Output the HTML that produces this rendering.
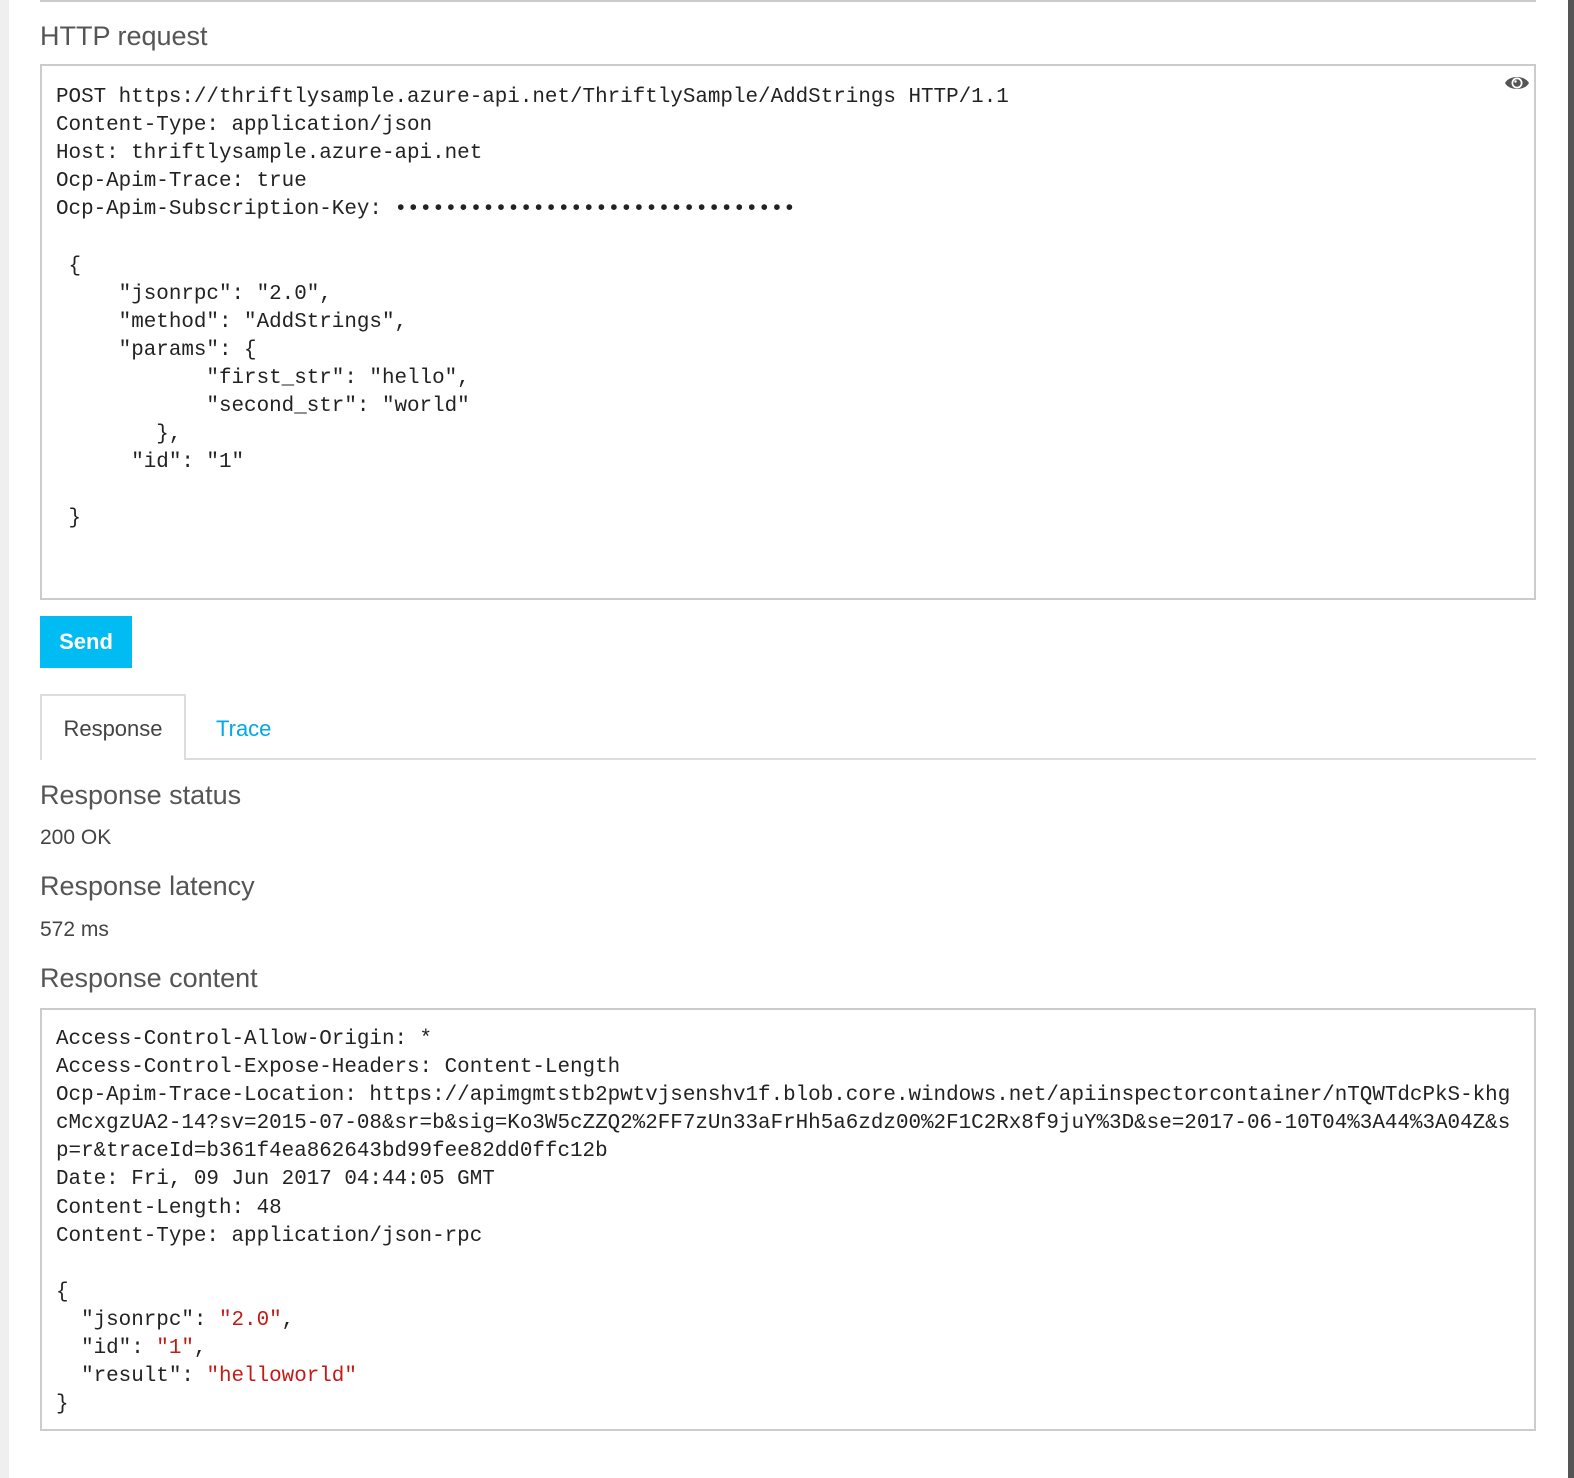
<!DOCTYPE html>
<html><head><meta charset="utf-8"><style>
*{margin:0;padding:0;box-sizing:border-box}
body{width:1574px;height:1478px;background:#fff;position:relative;overflow:hidden;font-family:"Segoe UI","Liberation Sans",sans-serif;color:#444}
.abs{position:absolute}
.code{font-family:"Liberation Mono",monospace;font-size:20.9px;line-height:28.1px;color:#222;white-space:pre}
.h{font-size:27px;font-weight:300;color:#555;line-height:34px}
.t{font-size:21px;color:#444;line-height:28px}
.box{border:2px solid #ccc;left:40px;width:1496px}
.s{color:#c41a16}
</style></head><body>
<div class="abs" style="left:0;top:0;width:9px;height:1478px;background:#efefef"></div>
<div class="abs" style="left:1568px;top:0;width:6px;height:1478px;background:#555"></div>
<div class="abs" style="left:40px;top:0;width:1496px;height:2px;background:#ccc"></div>
<div class="abs h" style="left:40px;top:19px">HTTP request</div>
<div class="abs box" style="top:64px;height:536px"></div>
<svg class="abs" style="left:1504px;top:73px" width="26" height="20" viewBox="0 0 26 20"><path d="M1 10 C5 2 21 2 25 10 C21 18 5 18 1 10Z" fill="#555"/><circle cx="13" cy="10" r="5.5" fill="#fff"/><circle cx="13" cy="10" r="3.8" fill="#555"/><circle cx="11.5" cy="8.5" r="1.2" fill="#fff"/></svg>
<div class="abs code" style="left:56px;top:84px">POST https://thriftlysample.azure-api.net/ThriftlySample/AddStrings HTTP/1.1
Content-Type: application/json
Host: thriftlysample.azure-api.net
Ocp-Apim-Trace: true
Ocp-Apim-Subscription-Key: ••••••••••••••••••••••••••••••••

 {
     "jsonrpc": "2.0",
     "method": "AddStrings",
     "params": {
            "first_str": "hello",
            "second_str": "world"
        },
      "id": "1"

 }</div>
<div class="abs" style="left:40px;top:616px;width:92px;height:52px;background:#00bcf2;color:#fff;font-size:22px;line-height:52px;text-align:center;font-weight:600">Send</div>
<div class="abs" style="left:40px;top:758px;width:1496px;height:2px;background:#ddd"></div>
<div class="abs" style="left:40px;top:694px;width:146px;height:66px;border:2px solid #ddd;border-bottom:none;background:#fff;font-size:22px;line-height:66px;text-align:center;color:#444">Response</div>
<div class="abs" style="left:216px;top:696px;font-size:22px;line-height:66px;color:#00a8e8">Trace</div>
<div class="abs h" style="left:40px;top:778px">Response status</div>
<div class="abs t" style="left:40px;top:824px">200 OK</div>
<div class="abs h" style="left:40px;top:869px">Response latency</div>
<div class="abs t" style="left:40px;top:916px">572 ms</div>
<div class="abs h" style="left:40px;top:961px">Response content</div>
<div class="abs box" style="top:1008px;height:423px"></div>
<div class="abs code" style="left:56px;top:1026px">Access-Control-Allow-Origin: *
Access-Control-Expose-Headers: Content-Length
Ocp-Apim-Trace-Location: https://apimgmtstb2pwtvjsenshv1f.blob.core.windows.net/apiinspectorcontainer/nTQWTdcPkS-khg
cMcxgzUA2-14?sv=2015-07-08&amp;sr=b&amp;sig=Ko3W5cZZQ2%2FF7zUn33aFrHh5a6zdz00%2F1C2Rx8f9juY%3D&amp;se=2017-06-10T04%3A44%3A04Z&amp;s
p=r&amp;traceId=b361f4ea862643bd99fee82dd0ffc12b
Date: Fri, 09 Jun 2017 04:44:05 GMT
Content-Length: 48
Content-Type: application/json-rpc

{
  "jsonrpc": <span class="s">"2.0"</span>,
  "id": <span class="s">"1"</span>,
  "result": <span class="s">"helloworld"</span>
}</div>
</body></html>
